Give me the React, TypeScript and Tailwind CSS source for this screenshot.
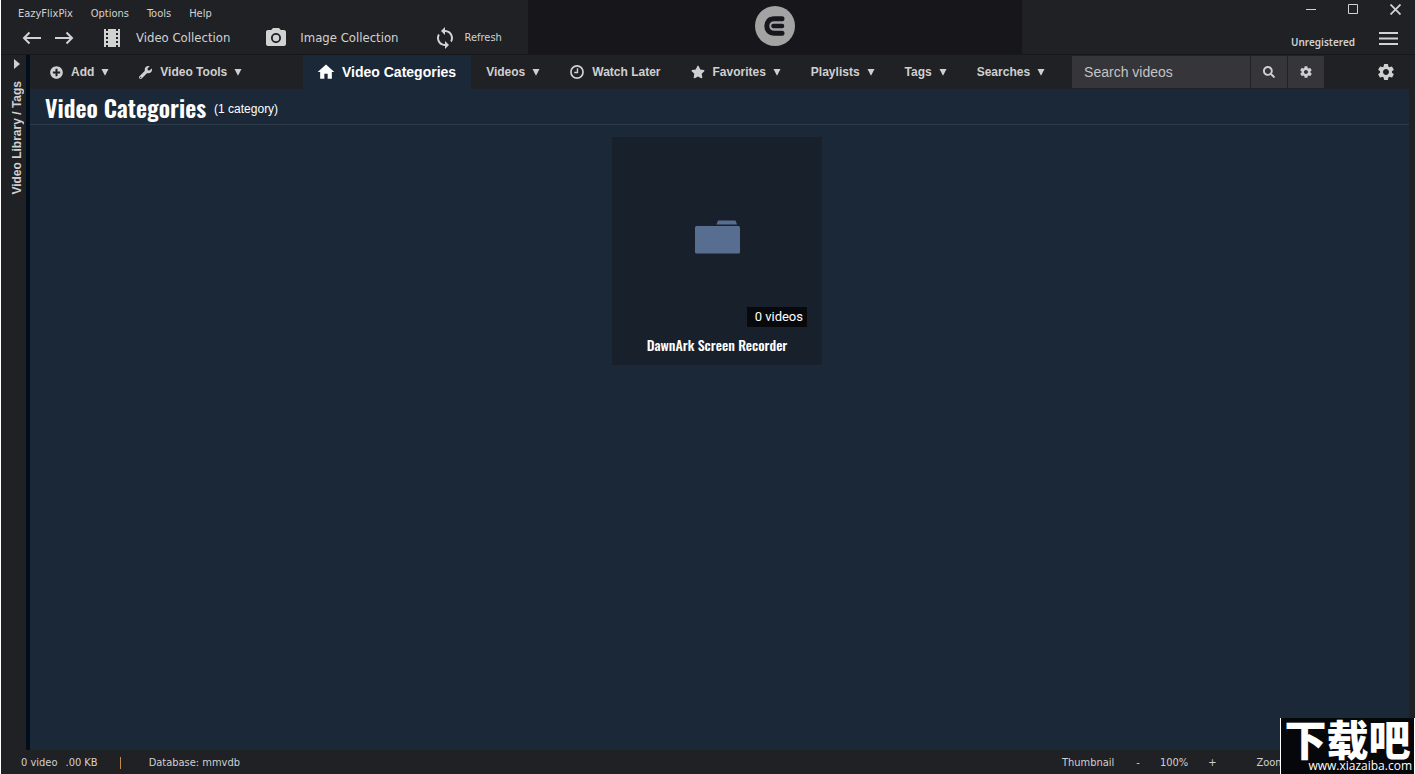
import type { ReactNode } from "react";
import { FaPlusCircle, FaSearch, FaStar, FaWrench } from "react-icons/fa";
import { IoMdSettings } from "react-icons/io";
import { MdHome, MdPhotoCamera, MdSettings, MdSync, MdTheaters } from "react-icons/md";

const tahoma = "font-['DejaVu_Sans_Condensed','Noto_Sans',sans-serif]";
const arial = "font-['Liberation_Sans',Arial,sans-serif]";
const condensed = "font-['Oswald','Roboto_Condensed','Liberation_Sans_Narrow',sans-serif]";

const menus = ["EazyFlixPix", "Options", "Tools", "Help"];

function Caret() {
  return (
    <svg width="8" height="8" viewBox="0 0 8 8" fill="currentColor" aria-hidden>
      <path d="M.5 1h7L4 7.800z" />
    </svg>
  );
}

function ArrowIcon({ flip }: { flip?: boolean }) {
  return (
    <svg
      width="20"
      height="14"
      viewBox="0 0 20 14"
      fill="none"
      stroke="currentColor"
      strokeWidth="2"
      className={flip ? "rotate-180" : ""}
      aria-hidden
    >
      <path d="M19 7H2M7.500 1.500L2 7l5.500 5.500" />
    </svg>
  );
}

function ClockIcon() {
  return (
    <svg width="14" height="14" viewBox="0 0 15 15" fill="none" stroke="currentColor" aria-hidden>
      <circle cx="7.500" cy="7.500" r="6.500" strokeWidth="1.800" />
      <path d="M8 3.500V8H4.500" strokeWidth="1.500" />
    </svg>
  );
}

function LogoIcon() {
  return (
    <svg width="40" height="40" viewBox="0 0 40 40" fill="none" aria-hidden>
      <circle cx="20" cy="20" r="20" fill="#a3a3a3" />
      <path
        d="M27 12.800H19.500C14 12.800 11.800 16 11.800 20s2.200 7.200 7.700 7.200H27"
        stroke="#17171b"
        strokeWidth="5"
        strokeLinecap="round"
      />
      <path d="M18.500 20H27" stroke="#17171b" strokeWidth="4.600" strokeLinecap="round" />
    </svg>
  );
}

function NavItem({
  icon,
  label,
  caret,
}: {
  icon?: ReactNode;
  label: string;
  caret?: boolean;
}) {
  return (
    <button
      type="button"
      className="flex h-full shrink-0 items-center px-[15px] text-[12px] font-bold whitespace-nowrap"
    >
      {icon ? <span className="mr-2">{icon}</span> : null}
      {label}
      {caret ? (
        <span className="ml-[7px]">
          <Caret />
        </span>
      ) : null}
    </button>
  );
}

function Header() {
  return (
    <header className={`flex h-[55px] border-b border-[#17171b] text-[#d2d2d2] ${tahoma}`}>
      <div className="w-[527px] shrink-0">
        <nav className="flex h-[26px] items-center gap-[18px] pt-[2px] pl-[17px] text-[11px]">
          {menus.map((menu) => (
            <button key={menu} type="button">
              {menu}
            </button>
          ))}
        </nav>
        <div className="flex h-6 items-center pl-[21px] text-[13px]">
          <button type="button" aria-label="Back">
            <ArrowIcon />
          </button>
          <button type="button" aria-label="Forward" className="ml-3">
            <ArrowIcon flip />
          </button>
          <button type="button" className="ml-[26px] flex items-center gap-3">
            <MdTheaters size={24} />
            Video Collection
          </button>
          <button type="button" className="ml-[34px] flex items-center gap-3">
            <MdPhotoCamera size={24} />
            Image Collection
          </button>
          <button type="button" className="ml-[34px] flex items-center gap-2 text-[11px]">
            <MdSync size={24} />
            Refresh
          </button>
        </div>
      </div>
      <div className="flex flex-1 justify-center bg-[#17171b] pt-[6px]">
        <LogoIcon />
      </div>
      <div className="w-[393px] shrink-0">
        <div className="flex h-[18px] items-center justify-end gap-8 pr-[14px]">
          <button type="button" aria-label="Minimize">
            <svg width="10" height="10" viewBox="0 0 10 10" stroke="currentColor">
              <path d="M0 5.500h10" />
            </svg>
          </button>
          <button type="button" aria-label="Maximize">
            <svg width="10" height="10" viewBox="0 0 10 10" fill="none" stroke="currentColor">
              <path d="M.5.5h9v9h-9z" />
            </svg>
          </button>
          <button type="button" aria-label="Close">
            <svg width="11" height="11" viewBox="0 0 11 11" stroke="currentColor" strokeWidth="1.800">
              <path d="M.5.5l10 10M10.500.5l-10 10" />
            </svg>
          </button>
        </div>
        <div className="flex h-10 items-center justify-end gap-6 pr-[17px]">
          <span className="pt-2 font-['Noto_Sans',sans-serif] text-[10px] font-semibold">
            Unregistered
          </span>
          <button type="button" aria-label="Menu">
            <svg width="19" height="13" viewBox="0 0 19 13" fill="currentColor">
              <path d="M0 0h19v2H0zM0 5.500h19v2H0zM0 11h19v2H0z" />
            </svg>
          </button>
        </div>
      </div>
    </header>
  );
}

function NavBar() {
  return (
    <div className={`flex h-[34px] items-center bg-[#202125] text-[#d0d0d0] ${arial}`}>
      <div className="flex h-full w-[273px] shrink-0 pl-[5px]">
        <NavItem icon={<FaPlusCircle size={13} />} label="Add" caret />
        <NavItem icon={<FaWrench size={13} />} label="Video Tools" caret />
      </div>
      <button
        type="button"
        className="flex h-full shrink-0 items-center gap-[6px] bg-[#1b2837] pr-[15px] pl-[13px] text-[14px] font-bold whitespace-nowrap text-white"
      >
        <MdHome size={20} />
        Video Categories
      </button>
      <NavItem label="Videos" caret />
      <NavItem icon={<ClockIcon />} label="Watch Later" />
      <NavItem icon={<FaStar size={14} />} label="Favorites" caret />
      <NavItem label="Playlists" caret />
      <NavItem label="Tags" caret />
      <NavItem label="Searches" caret />
      <div className="ml-3 flex h-8 shrink-0 gap-px">
        <input
          type="text"
          aria-label="Search videos"
          placeholder="Search videos"
          className="w-[178px] bg-[#35353a] px-3 text-[14px] outline-none placeholder:text-[#c4c4c4]"
        />
        <button type="button" aria-label="Search" className="flex w-9 items-center justify-center bg-[#35353a]">
          <FaSearch size={12} />
        </button>
        <button type="button" aria-label="Search options" className="flex w-9 items-center justify-center bg-[#35353a]">
          <IoMdSettings size={14} />
        </button>
      </div>
      <button type="button" aria-label="Settings" className="mr-[19px] ml-auto">
        <MdSettings size={20} />
      </button>
    </div>
  );
}

function CategoryCard() {
  return (
    <article className="flex h-[228px] w-[210px] flex-col bg-[#18212b]">
      <div className="relative flex h-[196px] items-center justify-center pt-1">
        <svg width="45" height="34" viewBox="0 0 45 34" fill="#586e91" aria-hidden>
          <path d="M23 .5h17.500l1.500 4H21.500z" />
          <rect y="6" width="45" height="27.500" rx="1.500" />
        </svg>
        <span className="absolute right-[15px] bottom-[6px] bg-[#08090c] pr-1 pl-2 font-['Roboto',sans-serif] text-[13px] leading-5 text-white">
          0 videos
        </span>
      </div>
      <h2 className={`pt-[2px] text-center text-[14px] leading-5 font-medium text-white ${condensed}`}>
        DawnArk Screen Recorder
      </h2>
    </article>
  );
}

function StatusBar() {
  return (
    <footer
      className={`flex h-6 items-center bg-[#202125] pt-[2px] pl-5 text-[11px] text-[#d0d0d0] ${tahoma}`}
    >
      <span>0 video</span>
      <span className="ml-2">.00 KB</span>
      <span className="ml-[22px] h-3 w-px bg-[#c58a4a]" />
      <span className="ml-7">Database: mmvdb</span>
      <div className="mr-[130px] ml-auto flex items-center">
        <span>Thumbnail</span>
        <button type="button" aria-label="Smaller thumbnails" className="ml-[22px]">
          -
        </button>
        <span className="ml-5">100%</span>
        <button type="button" aria-label="Larger thumbnails" className="ml-5">
          +
        </button>
        <span className="ml-10">Zoom</span>
      </div>
    </footer>
  );
}

function SiteBadge() {
  return (
    <div className="absolute right-0 bottom-0 w-[135px] border-x border-white bg-[#06070b] text-center text-white">
      <p className="font-['Noto_Sans_CJK_SC',sans-serif] text-[42px] leading-10 font-black whitespace-nowrap">
        下载吧
      </p>
      <p className="pr-[2px] text-right font-['Open_Sans',sans-serif] text-[12px] leading-4">
        www.xiazaiba.com
      </p>
    </div>
  );
}

export default function App() {
  return (
    <div className="relative flex h-screen flex-col overflow-hidden border-l border-white bg-[#202125]">
      <Header />
      <div className="flex min-h-0 flex-1">
        <aside className="flex w-[29px] shrink-0 flex-col items-center border-r-4 border-[#000d1a] pt-1 text-[#d0d0d0]">
          <button type="button" aria-label="Expand panel" className="pl-[6px]">
            <svg width="6" height="10" viewBox="0 0 6 10" fill="currentColor">
              <path d="M0 0l6 5-6 5z" />
            </svg>
          </button>
          <span
            className={`mt-3 ml-[6px] rotate-180 text-[12px] leading-4 font-bold whitespace-nowrap [writing-mode:vertical-rl] ${arial}`}
          >
            Video Library / Tags
          </span>
        </aside>
        <div className="flex min-w-0 flex-1 flex-col">
          <NavBar />
          <main className="mr-[6px] flex-1 bg-[#1b2837]">
            <div className="flex h-9 items-center gap-2 border-b border-[#2c3a4a] pl-[15px] text-white">
              <h1 className={`text-[24px] leading-9 font-semibold ${condensed}`}>Video Categories</h1>
              <span className={`pt-1 text-[12px] ${arial}`}>(1 category)</span>
            </div>
            <div className="flex justify-center pt-3 pr-[5px]">
              <CategoryCard />
            </div>
          </main>
        </div>
      </div>
      <StatusBar />
      <SiteBadge />
    </div>
  );
}
